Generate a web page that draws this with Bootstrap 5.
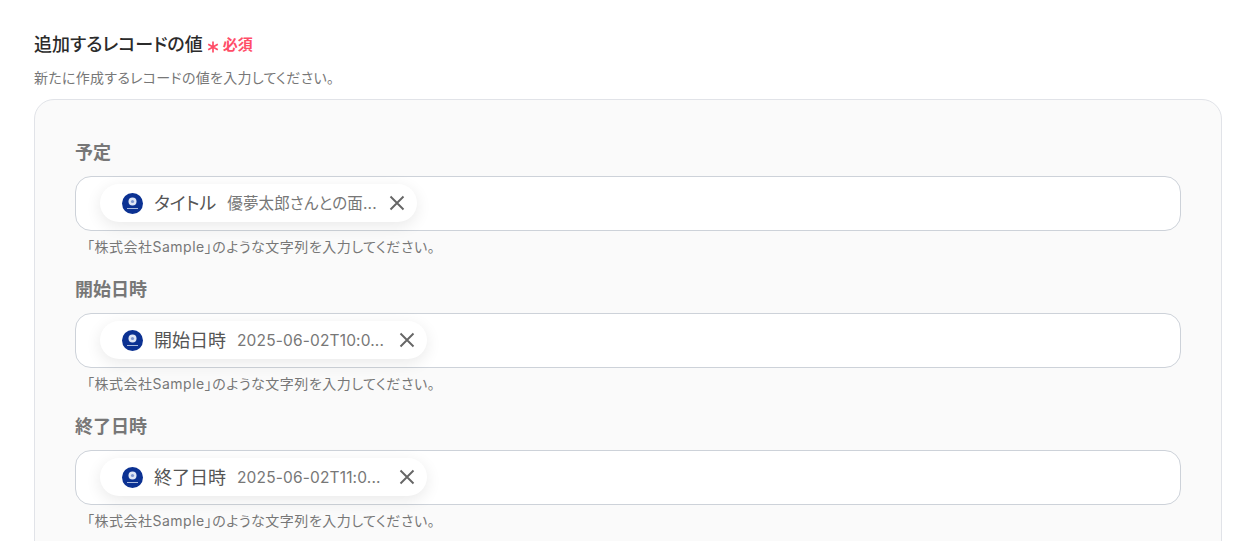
<!doctype html>
<html lang="ja"><head><meta charset="utf-8"><title>レコード</title>
<link href="https://cdn.jsdelivr.net/npm/bootstrap@5.3.0/dist/css/bootstrap.min.css" rel="stylesheet">
<style>
html,body{height:541px;overflow:hidden;background:#fff}
body{font-family:Inter,"Noto Sans CJK JP",sans-serif;color:#333;font-feature-settings:"palt"}
.page-wrap{padding:32px 32px 0 34px}
.main-label{font-size:18px;font-weight:500;height:26px;line-height:28px;color:#2b2b2b}
.req-star{width:12px;height:12px;margin-left:4px;margin-top:3px;flex:none}
.req-text{color:#ff4d67;font-size:15px;font-weight:600;margin-left:4px}
.main-sub{font-size:14px;line-height:20px;color:#777;margin-top:10px;letter-spacing:.3px}
.panel-box{margin-top:11px;width:1188px;height:600px;background:#fafafa;border:1px solid #e1e3e8;border-radius:20px;padding:41px 40px 0}
.fld-block{margin-bottom:20px;height:117px}
.fld-label{font-size:18px;font-weight:600;color:#777;line-height:24px;margin-bottom:11px}
.fld-input{height:55px;background:#fff;border:1px solid #cdd2d9;border-radius:16px;padding:7px 24px}
.token{height:38px;background:#fff;border-radius:19px;box-shadow:0 4px 16px rgba(0,0,0,.09);padding-left:22px;padding-right:10px}
.tok-ico{width:21px;height:21px;flex:none;margin-right:11px}
.tok-key{font-size:18px;color:#555;line-height:24px;margin-right:11px;white-space:nowrap;padding-top:2px}
.tok-val{font-size:15.5px;color:#777;white-space:nowrap;overflow:hidden;letter-spacing:.01em;width:149px;flex:none;padding-top:2px}
.tok-x{width:20px;height:20px;flex:none;margin-left:11px}
.fld-hint{font-size:14px;line-height:20px;color:#777;margin-top:6px;padding-left:12px;letter-spacing:.5px}
</style></head><body>
<div class="page-wrap">
<div class="d-flex align-items-center main-label"><span>追加するレコードの値</span><svg class="req-star" viewBox="0 0 12 12"><path d="M6 .5v11M1.2 3.2l9.6 5.6M10.8 3.2L1.2 8.8" stroke="#ff4d67" stroke-width="1.7" fill="none"/></svg><span class="req-text">必須</span></div>
<div class="main-sub">新たに作成するレコードの値を入力してください。</div>
<div class="panel-box">
<div class="fld-block"><div class="fld-label">予定</div>
<div class="fld-input"><div class="token d-inline-flex align-items-center"><svg class="tok-ico" viewBox="0 0 21 21"><circle cx="10.5" cy="10.5" r="10.5" fill="#0b3192"/><circle cx="10.5" cy="8.5" r="4" fill="#dfe6f5"/><circle cx="10.5" cy="8.5" r="1.6" fill="#7f97cf"/><rect x="5" y="15" width="11" height="1" fill="#a9bade"/></svg><span class="tok-key">タイトル</span><span class="tok-val">優夢太郎さんとの面...</span><svg class="tok-x" viewBox="0 0 20 20"><path d="M3.5 3.5l13 13M16.5 3.5l-13 13" stroke="#666" stroke-width="1.9" fill="none"/></svg></div></div>
<div class="fld-hint">「株式会社Sample」のような文字列を入力してください。</div></div>
<div class="fld-block"><div class="fld-label">開始日時</div>
<div class="fld-input"><div class="token d-inline-flex align-items-center"><svg class="tok-ico" viewBox="0 0 21 21"><circle cx="10.5" cy="10.5" r="10.5" fill="#0b3192"/><circle cx="10.5" cy="8.5" r="4" fill="#dfe6f5"/><circle cx="10.5" cy="8.5" r="1.6" fill="#7f97cf"/><rect x="5" y="15" width="11" height="1" fill="#a9bade"/></svg><span class="tok-key">開始日時</span><span class="tok-val">2025-06-02T10:0...</span><svg class="tok-x" viewBox="0 0 20 20"><path d="M3.5 3.5l13 13M16.5 3.5l-13 13" stroke="#666" stroke-width="1.9" fill="none"/></svg></div></div>
<div class="fld-hint">「株式会社Sample」のような文字列を入力してください。</div></div>
<div class="fld-block"><div class="fld-label">終了日時</div>
<div class="fld-input"><div class="token d-inline-flex align-items-center"><svg class="tok-ico" viewBox="0 0 21 21"><circle cx="10.5" cy="10.5" r="10.5" fill="#0b3192"/><circle cx="10.5" cy="8.5" r="4" fill="#dfe6f5"/><circle cx="10.5" cy="8.5" r="1.6" fill="#7f97cf"/><rect x="5" y="15" width="11" height="1" fill="#a9bade"/></svg><span class="tok-key">終了日時</span><span class="tok-val">2025-06-02T11:0...</span><svg class="tok-x" viewBox="0 0 20 20"><path d="M3.5 3.5l13 13M16.5 3.5l-13 13" stroke="#666" stroke-width="1.9" fill="none"/></svg></div></div>
<div class="fld-hint">「株式会社Sample」のような文字列を入力してください。</div></div>
</div></div>
<script src="https://cdn.jsdelivr.net/npm/bootstrap@5.3.0/dist/js/bootstrap.bundle.min.js"></script>
</body></html>
